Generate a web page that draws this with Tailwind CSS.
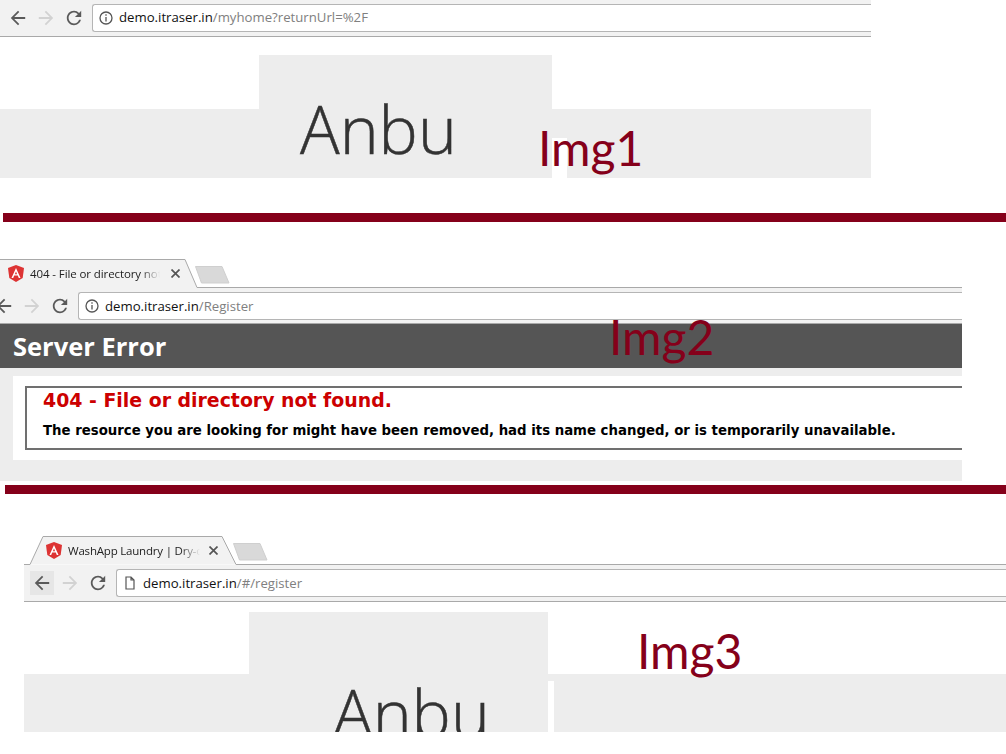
<!DOCTYPE html>
<html>
<head>
<meta charset="utf-8">
<script src="https://cdn.jsdelivr.net/npm/@tailwindcss/browser@4"></script>
</head>
<body class="bg-white">
<div class="relative w-[1006px] h-[754px] overflow-hidden bg-white font-['Open_Sans',sans-serif]">

  <!-- Img1 -->
  <section class="absolute left-0 top-0 w-[871px] h-[178px]">
    <div class="flex items-center h-[37px] bg-[#f2f2f2] border-b border-[#a9a9a9]">
      <div class="flex items-center gap-[10px] pl-[9px] pr-[9px]">
        <svg class="w-[18px] h-[18px]" viewBox="2 2 20 20" fill="#5a5a5a"><path d="M20 11H7.83l5.59-5.59L12 4l-8 8 8 8 1.41-1.41L7.83 13H20v-2z"/></svg>
        <svg class="w-[18px] h-[18px]" viewBox="2 2 20 20" fill="#d2d2d2"><path d="M4 13h12.17l-5.59 5.59L12 20l8-8-8-8-1.41 1.41L16.17 11H4z"/></svg>
        <svg class="w-[18px] h-[18px]" viewBox="2 2 20 20" fill="#5a5a5a"><path d="M17.65 6.35A7.958 7.958 0 0 0 12 4c-4.42 0-7.99 3.58-7.99 8s3.57 8 7.99 8c3.73 0 6.84-2.55 7.73-6h-2.08A5.99 5.99 0 0 1 12 18c-3.31 0-6-2.69-6-6s2.69-6 6-6c1.66 0 3.14.69 4.22 1.78L13 11h7V4l-2.35 2.35z"/></svg>
      </div>
      <div class="flex items-center flex-1 h-[28px] bg-white border border-[#b5b5b5] border-r-0 rounded-l-[3px] pl-[6px] text-[13.2px]">
        <svg class="w-[14px] h-[14px] mr-[6px]" viewBox="0 0 14 14" fill="none" stroke="#555" stroke-width="1.3"><circle cx="7" cy="7" r="6"/><path d="M7 6v4.5M7 3.3v1.4"/></svg>
        <span class="text-[#111]">demo.itraser.in</span><span class="text-[#808080]">/myhome?returnUrl=%2F</span>
      </div>
    </div>
    <div class="relative h-[141px] overflow-hidden">
      <div class="absolute left-0 right-0 top-[72px] bottom-0 bg-[#ededed]"></div>
      <div class="absolute left-[259px] w-[293px] top-[18px] bottom-0 bg-[#ededed]">
        <span class="block mt-[33px] ml-[41px] text-[66px] leading-[80px] font-light text-[#333] [-webkit-text-stroke:0.5px_#333]">Anbu</span>
      </div>
      <div class="absolute left-[552px] w-[15px] top-[101px] bottom-0 bg-white"></div>
    </div>
  </section>
  <div class="absolute left-[538px] top-[119px] text-[48px] leading-[58px] text-[#85001a] font-['Lato',sans-serif]">Img1</div>
  <div class="absolute left-[3px] right-0 top-[213px] h-[9px] bg-[#85001a]"></div>

  <!-- Img2 -->
  <section class="absolute left-0 top-[259px] w-[962px] h-[222px]">
    <div class="relative h-[29px]">
      <svg class="absolute left-0 top-0 w-[962px] h-[29px]" viewBox="0 0 962 29">
        <path d="M0 0H185L197 29H0z" fill="#f2f2f2"/>
        <path d="M0 .5H185L197 28.500H962" fill="none" stroke="#a9a9a9"/>
        <path d="M195.500 7.500H222L229 24H201.500z" fill="#d9d9d9" stroke="#cfcfcf" stroke-linejoin="round"/>
      </svg>
      <div class="relative flex items-center h-[29px] pl-[8px] text-[11.5px] tracking-[-0.1px] text-[#222] whitespace-nowrap">
        <svg class="w-[16px] h-[17px] mr-[6px] shrink-0" viewBox="0 0 16 17"><path d="M8 0L0 3l1.3 10L8 17l6.7-4L16 3z" fill="#dd3333"/><path d="M8 3L3.5 13h1.7l1-2.4h3.6l1 2.4h1.7zM6.9 9.2L8 6.6l1.1 2.6z" fill="#fff"/></svg>
        <span class="w-[130px] overflow-hidden [mask-image:linear-gradient(to_right,black_85%,transparent)]">404 - File or directory not found</span>
        <svg class="ml-[11px] w-[9px] h-[9px]" viewBox="0 0 9 9" fill="none" stroke="#555" stroke-width="1.7"><path d="M.5.5l8 8M8.500.5l-8 8"/></svg>
      </div>
    </div>
    <div class="flex items-center h-[36px] bg-[#f2f2f2] border-b border-[#a9a9a9]">
      <div class="flex items-center gap-[10px] ml-[-14px] pl-[9px] pr-[9px]">
        <svg class="w-[18px] h-[18px]" viewBox="2 2 20 20" fill="#5a5a5a"><path d="M20 11H7.83l5.59-5.59L12 4l-8 8 8 8 1.41-1.41L7.83 13H20v-2z"/></svg>
        <svg class="w-[18px] h-[18px]" viewBox="2 2 20 20" fill="#d2d2d2"><path d="M4 13h12.17l-5.59 5.59L12 20l8-8-8-8-1.41 1.41L16.17 11H4z"/></svg>
        <svg class="w-[18px] h-[18px]" viewBox="2 2 20 20" fill="#5a5a5a"><path d="M17.65 6.35A7.958 7.958 0 0 0 12 4c-4.42 0-7.99 3.58-7.99 8s3.57 8 7.99 8c3.73 0 6.84-2.55 7.73-6h-2.08A5.99 5.99 0 0 1 12 18c-3.31 0-6-2.69-6-6s2.69-6 6-6c1.66 0 3.14.69 4.22 1.78L13 11h7V4l-2.35 2.35z"/></svg>
      </div>
      <div class="flex items-center flex-1 h-[28px] bg-white border border-[#b5b5b5] border-r-0 rounded-l-[3px] pl-[6px] text-[13.2px]">
        <svg class="w-[14px] h-[14px] mr-[6px]" viewBox="0 0 14 14" fill="none" stroke="#555" stroke-width="1.3"><circle cx="7" cy="7" r="6"/><path d="M7 6v4.5M7 3.3v1.4"/></svg>
        <span class="pt-[2px] text-[#111]">demo.itraser.in</span><span class="pt-[2px] text-[#808080]">/Register</span>
      </div>
    </div>
    <div class="h-[157px] bg-[#ededed]">
      <div class="flex items-center h-[44px] bg-[#555] pl-[13px] text-[25.5px] font-bold text-white">Server Error</div>
      <div class="mt-[8px] ml-[13px] h-[84px] bg-white pl-[12px] pt-[10px]">
        <div class="h-[64px] border-2 border-r-0 border-[#707070] pl-[16px] pt-[1px] font-['DejaVu_Sans',sans-serif] font-bold whitespace-nowrap">
          <div class="text-[18.9px] leading-[22px] text-[#cc0000]">404 - File or directory not found.</div>
          <div class="mt-[12px] text-[13.3px] leading-[16px] text-black">The resource you are looking for might have been removed, had its name changed, or is temporarily unavailable.</div>
        </div>
      </div>
    </div>
  </section>
  <div class="absolute left-[609px] top-[308px] text-[48px] leading-[58px] text-[#85001a] font-['Lato',sans-serif]">Img2</div>
  <div class="absolute left-[5px] right-0 top-[485px] h-[9px] bg-[#85001a]"></div>

  <!-- Img3 -->
  <section class="absolute left-[24px] top-[536px] right-0 h-[196px] overflow-hidden">
    <div class="relative h-[29px]">
      <svg class="absolute left-0 top-0 w-[982px] h-[29px]" viewBox="0 0 982 29">
        <path d="M0 28.500H6L19 .5H198L212 28.500H982" fill="#f2f2f2" stroke="#a9a9a9"/>
        <path d="M209.500 7.500H236L243 24H215.500z" fill="#d9d9d9" stroke="#cfcfcf" stroke-linejoin="round"/>
      </svg>
      <div class="relative flex items-center h-[29px] pl-[22px] text-[11.5px] tracking-[-0.2px] text-[#222] whitespace-nowrap">
        <svg class="w-[16px] h-[17px] mr-[6px] shrink-0" viewBox="0 0 16 17"><path d="M8 0L0 3l1.3 10L8 17l6.7-4L16 3z" fill="#dd3333"/><path d="M8 3L3.5 13h1.7l1-2.4h3.6l1 2.4h1.7zM6.9 9.2L8 6.6l1.1 2.6z" fill="#fff"/></svg>
        <span class="w-[132px] overflow-hidden [mask-image:linear-gradient(to_right,black_85%,transparent)]">WashApp Laundry | Dry-cleaning</span>
        <svg class="ml-[9px] w-[9px] h-[9px]" viewBox="0 0 9 9" fill="none" stroke="#555" stroke-width="1.7"><path d="M.5.5l8 8M8.500.5l-8 8"/></svg>
      </div>
    </div>
    <div class="flex items-center h-[37px] bg-[#f2f2f2] border-b border-[#a9a9a9]">
      <div class="flex items-center gap-[10px] pl-[9px] pr-[9px]">
        <svg class="w-[18px] h-[18px] outline-[3px] outline-[#e6e6e6] bg-[#e6e6e6]" viewBox="2 2 20 20" fill="#5a5a5a"><path d="M20 11H7.83l5.59-5.59L12 4l-8 8 8 8 1.41-1.41L7.83 13H20v-2z"/></svg>
        <svg class="w-[18px] h-[18px]" viewBox="2 2 20 20" fill="#d2d2d2"><path d="M4 13h12.17l-5.59 5.59L12 20l8-8-8-8-1.41 1.41L16.17 11H4z"/></svg>
        <svg class="w-[18px] h-[18px]" viewBox="2 2 20 20" fill="#5a5a5a"><path d="M17.65 6.35A7.958 7.958 0 0 0 12 4c-4.42 0-7.99 3.58-7.99 8s3.57 8 7.99 8c3.73 0 6.84-2.55 7.73-6h-2.08A5.99 5.99 0 0 1 12 18c-3.31 0-6-2.69-6-6s2.69-6 6-6c1.66 0 3.14.69 4.22 1.78L13 11h7V4l-2.35 2.35z"/></svg>
      </div>
      <div class="flex items-center flex-1 h-[28px] bg-white border border-[#b5b5b5] border-r-0 rounded-l-[3px] pl-[6px] text-[13.2px]">
        <svg class="w-[14px] h-[14px] mr-[6px]" viewBox="0 0 14 14" fill="none" stroke="#555" stroke-width="1.2"><path d="M3 1h5l3 3v9H3zM8 1v3h3"/></svg>
        <span class="pt-[2px] text-[#111]">demo.itraser.in</span><span class="pt-[2px] text-[#808080]">/#/register</span>
      </div>
    </div>
    <div class="relative h-[130px]">
      <div class="absolute left-0 right-0 top-[72px] bottom-0 bg-[#ededed]"></div>
      <div class="absolute left-[225px] w-[299px] top-[10px] bottom-0 bg-[#ededed] overflow-hidden">
        <span class="block mt-[60px] ml-[84px] text-[66px] leading-[80px] font-light text-[#333] [-webkit-text-stroke:0.5px_#333]">Anbu</span>
      </div>
      <div class="absolute left-[524px] w-[6px] top-[79px] bottom-0 bg-white"></div>
    </div>
  </section>
  <div class="absolute left-[637px] top-[622px] text-[48px] leading-[58px] text-[#85001a] font-['Lato',sans-serif]">Img3</div>
</div>
</body>
</html>
